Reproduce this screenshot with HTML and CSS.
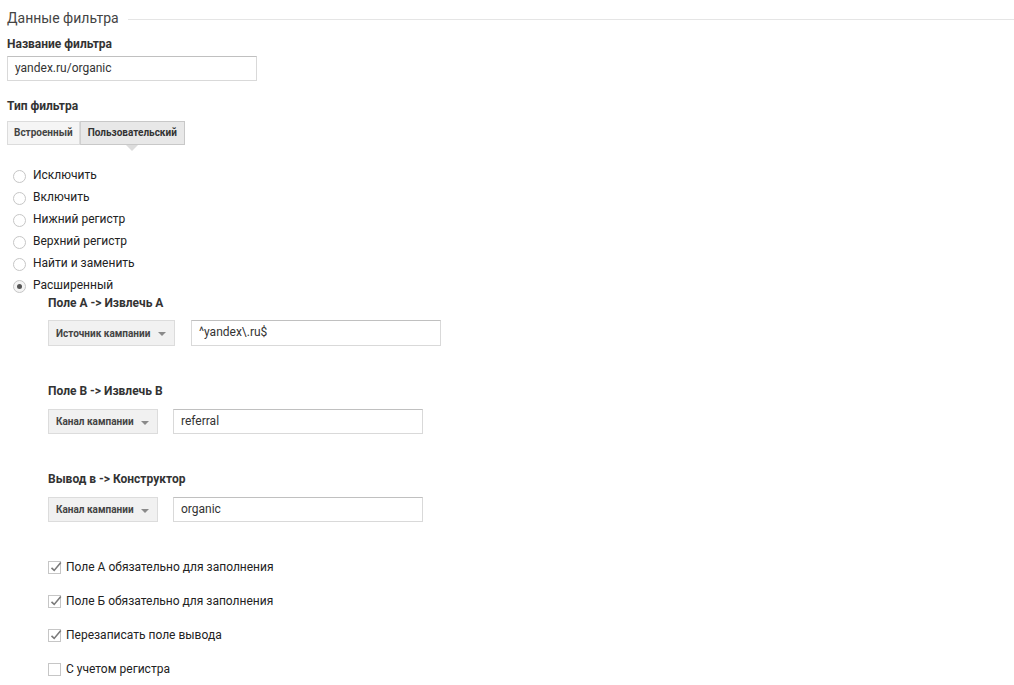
FILE: index.html
```html
<!DOCTYPE html>
<html lang="ru">
<head>
<meta charset="utf-8">
<title>Данные фильтра</title>
<link rel="stylesheet" href="styles.css">
</head>
<body>
<div class="page">
  <div class="section-head">
    <span class="section-title">Данные фильтра</span>
    <span class="section-line"></span>
  </div>

  <div class="label first-label">Название фильтра</div>
  <div class="text-input name-input">yandex.ru/organic</div>

  <div class="label type-label">Тип фильтра</div>
  <div class="tabs">
    <div class="tab tab-first">Встроенный</div>
    <div class="tab tab-active">Пользовательский</div>
  </div>

  <div class="radios">
    <div class="radio-row"><span class="radio"></span><span>Исключить</span></div>
    <div class="radio-row"><span class="radio"></span><span>Включить</span></div>
    <div class="radio-row"><span class="radio"></span><span>Нижний регистр</span></div>
    <div class="radio-row"><span class="radio"></span><span>Верхний регистр</span></div>
    <div class="radio-row"><span class="radio"></span><span>Найти и заменить</span></div>
    <div class="radio-row"><span class="radio radio-checked"></span><span>Расширенный</span></div>
  </div>

  <div class="advanced">
    <div class="label sub-label sub-first">Поле A -&gt; Извлечь A</div>
    <div class="field-row">
      <div class="dropdown dd-wide"><span>Источник кампании</span><span class="caret"></span></div>
      <div class="text-input field-input">^yandex\.ru$</div>
    </div>

    <div class="label sub-label">Поле B -&gt; Извлечь B</div>
    <div class="field-row short">
      <div class="dropdown dd-narrow"><span>Канал кампании</span><span class="caret"></span></div>
      <div class="text-input field-input">referral</div>
    </div>

    <div class="label sub-label">Вывод в -&gt; Конструктор</div>
    <div class="field-row short">
      <div class="dropdown dd-narrow"><span>Канал кампании</span><span class="caret"></span></div>
      <div class="text-input field-input">organic</div>
    </div>

    <div class="checks">
      <div class="check-row"><span class="checkbox checked"><svg viewBox="0 0 13 13" width="13" height="13"><path d="M2.5 6.8 L5.2 9.4 L11.8 1.6" fill="none" stroke="#7a7a7a" stroke-width="1.6"/></svg></span><span>Поле A обязательно для заполнения</span></div>
      <div class="check-row"><span class="checkbox checked"><svg viewBox="0 0 13 13" width="13" height="13"><path d="M2.5 6.8 L5.2 9.4 L11.8 1.6" fill="none" stroke="#7a7a7a" stroke-width="1.6"/></svg></span><span>Поле Б обязательно для заполнения</span></div>
      <div class="check-row"><span class="checkbox checked"><svg viewBox="0 0 13 13" width="13" height="13"><path d="M2.5 6.8 L5.2 9.4 L11.8 1.6" fill="none" stroke="#7a7a7a" stroke-width="1.6"/></svg></span><span>Перезаписать поле вывода</span></div>
      <div class="check-row"><span class="checkbox"></span><span>С учетом регистра</span></div>
    </div>
  </div>
</div>
</body>
</html>
```

FILE: styles.css
```css
* { box-sizing: border-box; }
html, body { margin: 0; padding: 0; background: #fff; }
body {
  font-family: Roboto, "Liberation Sans", Arial, sans-serif;
  font-size: 12px;
  color: #222;
}
.page {
  padding: 8px 0 0 7px;
  display: flex;
  flex-direction: column;
  align-items: flex-start;
}
.section-head {
  display: flex;
  align-items: center;
  align-self: stretch;
  height: 20px;
}
.section-title {
  font-size: 14px;
  color: #444;
  line-height: 20px;
}
.section-line {
  flex: 1;
  height: 1px;
  background: #e5e5e5;
  margin-left: 9px;
  margin-top: 3px;
}
.label {
  font-weight: bold;
  font-size: 12px;
  color: #333;
  line-height: 16px;
}
.first-label { margin-top: 8px; }
.type-label { margin-top: 17px; }
.text-input {
  border: 1px solid #d9d9d9;
  border-top-color: #c0c0c0;
  height: 25px;
  line-height: 23px;
  padding: 0 7px;
  font-size: 12px;
  color: #333;
  background: #fff;
}
.name-input { width: 250px; margin-top: 4px; }
.tabs {
  display: flex;
  margin-top: 7px;
}
.tab {
  position: relative;
  height: 24px;
  line-height: 22px;
  padding: 0 7px;
  font-size: 10px;
  font-weight: bold;
  color: #444;
  background: #f5f5f5;
  border: 1px solid #dcdcdc;
}
.tab-first { padding: 0 6px; }
.tab + .tab { border-left: 1px solid #d0d0d0; }
.tab-active {
  background: #e8e8e8;
  border-color: #c8c8c8;
  color: #333;
}
.tab-active::after {
  content: "";
  position: absolute;
  left: 50%;
  bottom: -7px;
  margin-left: -6px;
  border-left: 6px solid transparent;
  border-right: 6px solid transparent;
  border-top: 6px solid #dcdcdc;
}
.radios {
  margin-top: 19px;
  display: flex;
  flex-direction: column;
}
.radio-row {
  display: flex;
  align-items: center;
  height: 22px;
  color: #222;
}
.radio {
  width: 13px;
  height: 13px;
  border-radius: 50%;
  border: 1px solid #c6c6c6;
  background: #fff;
  margin: 2px 7px 0 6px;
  display: flex;
  align-items: center;
  justify-content: center;
}
.radio-checked {
  background: #f4f4f4;
}
.radio-checked::after {
  content: "";
  width: 5px;
  height: 5px;
  border-radius: 50%;
  background: #555;
}
.advanced {
  display: flex;
  flex-direction: column;
  align-items: flex-start;
  padding-left: 41px;
}
.sub-label { line-height: 14px; margin-top: 38px; }
.sub-first { margin-top: 0; }
.field-row {
  display: flex;
  align-items: center;
  margin-top: 10px;
  height: 26px;
}
.field-row.short { height: 25px; margin-top: 11px; }
.dropdown {
  display: flex;
  align-items: center;
  justify-content: space-between;
  height: 100%;
  padding: 0 8px 0 7px;
  background: #f1f1f1;
  border: 1px solid #dcdcdc;
  font-size: 10px;
  font-weight: bold;
  color: #444;
}
.dd-wide { width: 127px; margin-right: 16px; }
.dd-narrow { width: 110px; margin-right: 15px; }
.caret {
  width: 0;
  height: 0;
  border-left: 4px solid transparent;
  border-right: 4px solid transparent;
  border-top: 4px solid #8a8a8a;
  margin-top: 2px;
}
.field-input {
  width: 250px;
  height: 100%;
}
.checks {
  margin-top: 28px;
  display: flex;
  flex-direction: column;
}
.check-row {
  display: flex;
  align-items: center;
  height: 34px;
  line-height: 34px;
  font-size: 12px;
  color: #222;
}
.checkbox {
  width: 13px;
  height: 13px;
  border: 1px solid #c6c6c6;
  background: #fff;
  margin-right: 5px;
  position: relative;
}
.checkbox svg {
  position: absolute;
  left: 0;
  top: -1px;
}
```
